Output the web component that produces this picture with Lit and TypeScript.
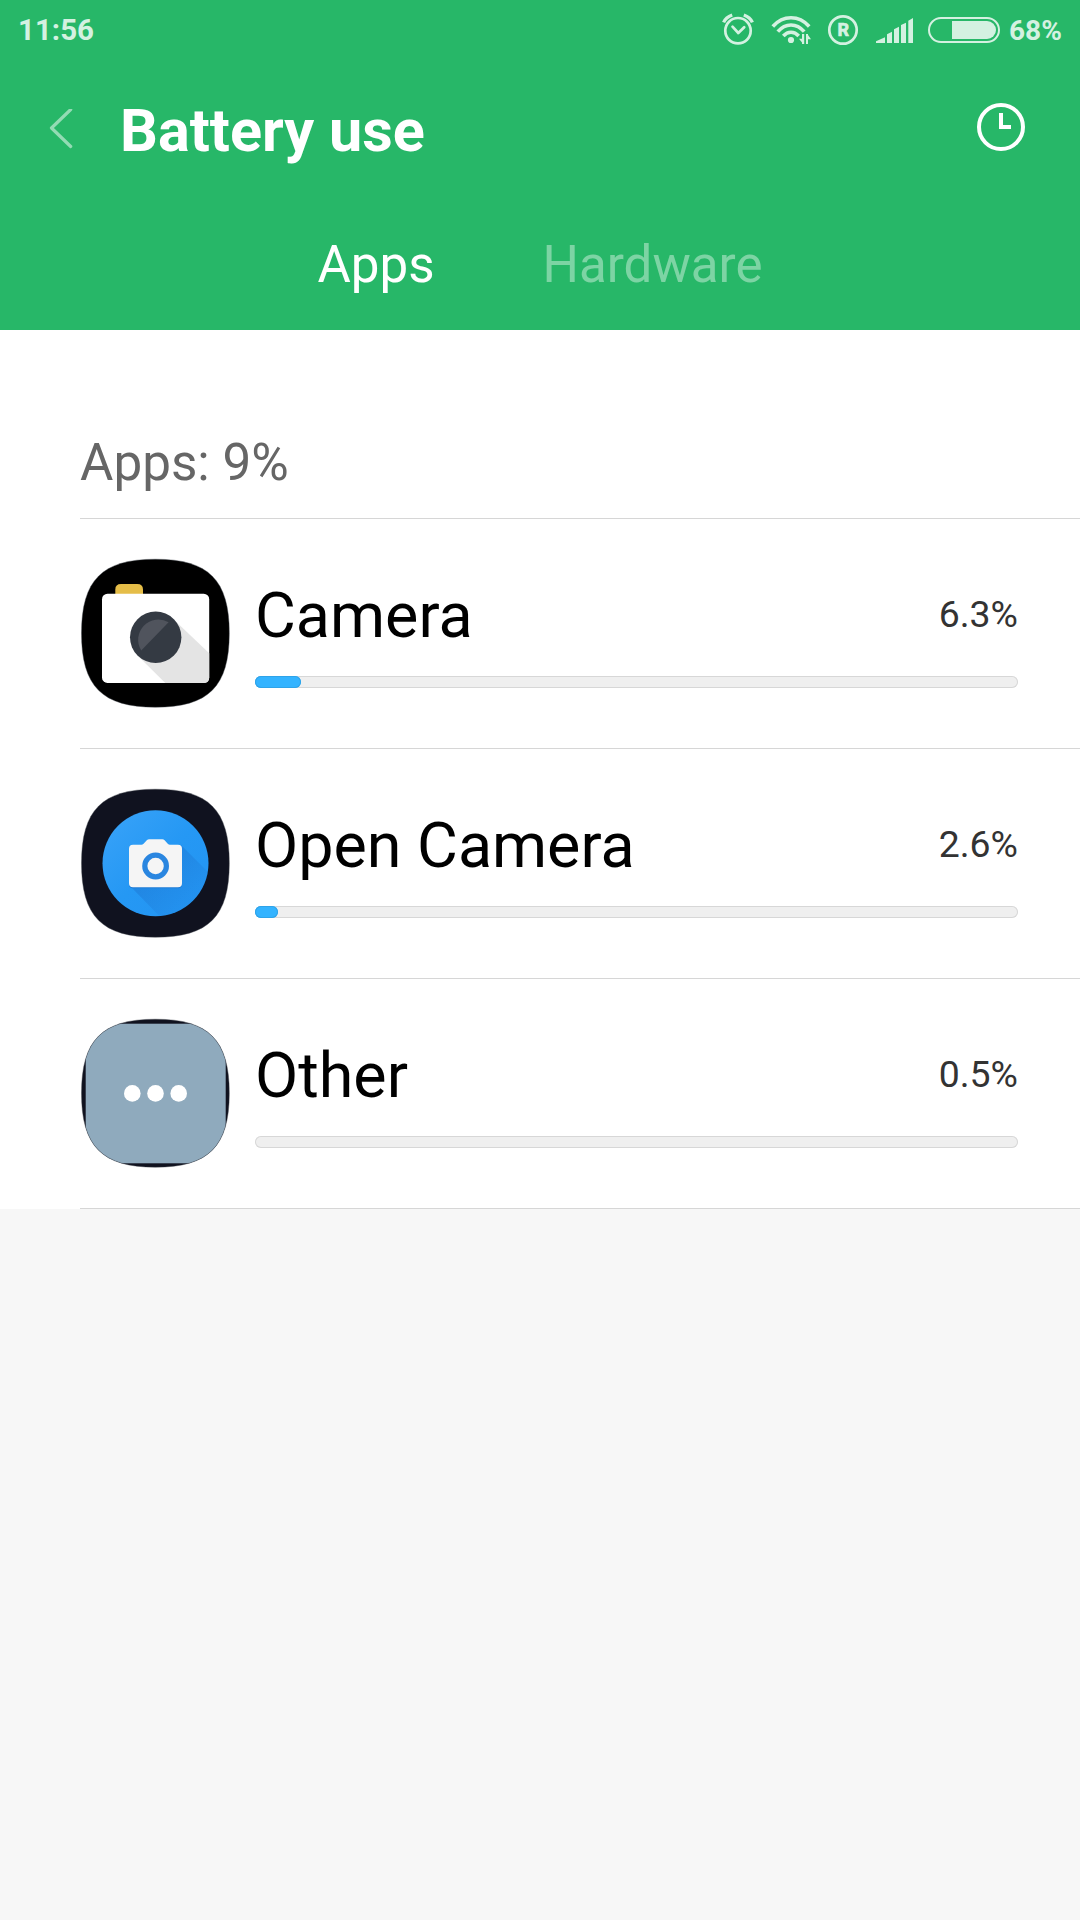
import { LitElement, html, svg, css } from "lit";
import { customElement, property } from "lit/decorators.js";

interface Usage {
  name: string;
  icon: "camera" | "open-camera" | "other";
  value: string;
  share: number;
}

const USAGE: Usage[] = [
  { name: "Camera", icon: "camera", value: "6.3%", share: 6 },
  { name: "Open Camera", icon: "open-camera", value: "2.6%", share: 3 },
  { name: "Other", icon: "other", value: "0.5%", share: 0 },
];

// Rounded launcher-icon mask shared by every app icon.
const SQUIRCLE =
  "M75.4 1.2C128.6 1.2 149.3 21.8 149.3 75.2C149.3 128.5 128.6 149.2 75.4 149.2C22.2 149.2 1.5 128.5 1.5 75.2C1.5 21.8 22.2 1.2 75.4 1.2Z";

@customElement("app-icon")
export class AppIcon extends LitElement {
  @property() kind: Usage["icon"] = "other";

  static styles = css`
    :host {
      display: block;
      width: 150px;
      height: 150px;
    }
    svg {
      display: block;
    }
    .edge {
      fill: none;
      stroke: #3c4048;
      stroke-opacity: 0.4;
      stroke-width: 1;
    }
  `;

  private art() {
    if (this.kind === "camera") {
      return svg`
        <path d=${SQUIRCLE} fill="#000"/>
        <path d="M35.3 38V31.5Q35.3 26 41 26H57.300Q63 26 63 31.500V38Z" fill="#e5bd48"/>
        <rect x="22" y="35.700" width="107.200" height="89.200" rx="5.500" fill="#fff"/>
        <path d="M94 61.700L129.200 95.200V119.400Q129.200 124.900 123.700 124.900H85.300L58 98Z" fill="#e4e4e4"/>
        <circle cx="75.700" cy="79.300" r="25.700" fill="#343a43"/>
        <path d="M88.600 64.200A20.300 20.300 0 0 0 61.200 92.500Z" fill="#50545d"/>`;
    }
    if (this.kind === "open-camera") {
      return svg`
        <defs>
          <linearGradient id="disc" x1="0" y1="0" x2="1" y2="1">
            <stop offset="0" stop-color="#3aa3f8"/>
            <stop offset="0.5" stop-color="#2598f4"/>
            <stop offset="1" stop-color="#2394f2"/>
          </linearGradient>
          <linearGradient id="cast" x1="0" y1="0" x2="1" y2="1">
            <stop offset="0.3" stop-color="#1c6fcb" stop-opacity="0.4"/>
            <stop offset="0.75" stop-color="#1c6fcb" stop-opacity="0"/>
          </linearGradient>
          <clipPath id="clip"><circle cx="75.500" cy="75.200" r="53"/></clipPath>
        </defs>
        <path d=${SQUIRCLE} fill="#10121f"/>
        <circle cx="75.500" cy="75.200" r="53" fill="url(#disc)"/>
        <path d="M101 57L145 101V145H96L50.500 98.500Z" fill="url(#cast)" clip-path="url(#clip)"/>
        <path d="M53 57.700H62.200L68.500 52.300H83L88.700 57.700H98Q102 57.700 102 61.700V96.300Q102 100.300 98 100.300H53Q49 100.300 49 96.300V61.700Q49 57.700 53 57.700Z" fill="#1d7bd6"/>
        <path d="M53 56.700H61.500Q62.500 56.700 63.300 55.900L66.800 52.300Q67.800 51.300 69.200 51.300H82.300Q83.700 51.300 84.600 52.300L88 55.900Q88.800 56.700 89.800 56.700H98Q102 56.700 102 60.700V95.300Q102 99.300 98 99.300H53Q49 99.300 49 95.300V60.700Q49 56.700 53 56.700Z" fill="#f5f5f5"/>
        <circle cx="75.600" cy="78" r="10.800" fill="#f5f5f5" stroke="#2a86e0" stroke-width="5.200"/>`;
    }
    return svg`
      <defs><clipPath id="mask"><path d=${SQUIRCLE}/></clipPath></defs>
      <path d=${SQUIRCLE} fill="#10121f"/>
      <rect x="5.700" y="5.700" width="140" height="139.600" fill="#8faabd" clip-path="url(#mask)"/>
      <circle cx="52.300" cy="75.400" r="8.300" fill="#fff"/>
      <circle cx="75.500" cy="75.400" r="8.300" fill="#fff"/>
      <circle cx="98.700" cy="75.400" r="8.300" fill="#fff"/>`;
  }

  render() {
    return html`<svg width="150" height="150" viewBox="0 0 150 150">${this.art()}<path class="edge" d=${SQUIRCLE}/></svg>`;
  }
}

@customElement("status-bar")
export class StatusBar extends LitElement {
  static styles = css`
    :host {
      display: flex;
      align-items: center;
      height: 60px;
      box-sizing: border-box;
      padding: 0 18px 0 18px;
      color: #d4f1e1;
      font-weight: 700;
    }
    svg {
      display: block;
      flex: none;
    }
    .time {
      flex: 1;
      font-size: 29.500px;
      line-height: 60px;
    }
    .level {
      width: 53px;
      font-size: 28px;
      line-height: 61px;
      white-space: nowrap;
    }
    .letter {
      font: 700 18px Roboto, sans-serif;
      stroke: currentColor;
      stroke-width: 0.7;
    }
  `;

  render() {
    return html`
      <span class="time">11:56</span>
      <svg width="289" height="60" viewBox="720 0 289 60" fill="none" stroke="currentColor">
        <circle cx="738" cy="30.700" r="12.700" stroke-width="2.700"/>
        <path d="M732.500 26.700L738.300 33L744.200 27.200" stroke-width="2.700" stroke-linecap="round" stroke-linejoin="round"/>
        <path d="M723.600 22.300Q725.800 17.300 732.200 15M752.400 22.300Q750.200 17.300 743.800 15" stroke-width="3.300"/>
        <g stroke-width="3.600">
          <path d="M772.800 26.500Q780.500 17.800 791 17.800T809.200 26.500"/>
          <path d="M777.800 31.700Q783.500 25 791 25T804.200 31.700"/>
          <path d="M783.300 36Q786.700 32.300 791 32.300T798.700 36"/>
        </g>
        <g fill="currentColor" stroke="none">
          <circle cx="791" cy="40" r="3.100"/>
          <path d="M802 34H804.200V44H802V42.500L799 38.700H802ZM806 34H808V35L811 39.300H808V44H806Z"/>
          <path d="M876 43V41.300L885 37.300V43ZM887 43V34.300L892 31.700V43ZM894 43V29.300L899 26.700V43ZM901 43V25L906 22.700V43ZM908.300 43V20.700L913 18V43Z"/>
          <path d="M952 21H987A9 9 0 0 1 987 39H952Z"/>
          <text class="letter" x="837.400" y="36">R</text>
        </g>
        <circle cx="843" cy="30" r="13.700" stroke-width="2.700"/>
        <rect x="929" y="18" width="70" height="24" rx="12" stroke-width="2"/>
      </svg>
      <span class="level">68%</span>
    `;
  }
}

@customElement("app-root")
export class AppRoot extends LitElement {
  static styles = css`
    :host {
      display: flex;
      flex-direction: column;
      width: 1080px;
      height: 1920px;
      background: #f7f7f7;
      font-family: Roboto, sans-serif;
      overflow: hidden;
    }
    header {
      height: 330px;
      background: #27b768;
      color: #fff;
    }
    svg {
      display: block;
      flex: none;
    }
    .title-bar {
      display: flex;
      align-items: center;
      box-sizing: border-box;
      height: 139px;
      padding: 2px 53px 0 48px;
    }
    h1 {
      flex: 1;
      margin: 0 0 0 46px;
      font-size: 59.400px;
      line-height: 80px;
      font-weight: 700;
    }
    .tabs {
      display: flex;
      justify-content: center;
      gap: 108px;
      font-size: 51.100px;
      line-height: 131px;
    }
    .tab {
      color: #7dd4a4;
    }
    .tab.active {
      color: #fff;
    }
    main {
      padding-left: 80px;
      background: #fff;
    }
    h2 {
      margin: 0;
      padding-top: 78px;
      border-bottom: 1px solid #d6d6d6;
      color: #666;
      font-size: 51.200px;
      line-height: 110px;
      font-weight: 400;
    }
    .row {
      display: flex;
      gap: 25px;
      box-sizing: border-box;
      height: 230px;
      padding: 39px 62px 0 0;
      border-bottom: 1px solid #d6d6d6;
    }
    .body {
      flex: 1;
      padding-top: 18px;
    }
    .labels {
      display: flex;
      justify-content: space-between;
      line-height: 79px;
    }
    .name {
      color: #000;
      font-size: 62.800px;
    }
    .value {
      color: #333;
      font-size: 37.400px;
      line-height: 76px;
    }
    .track {
      box-sizing: border-box;
      height: 12px;
      margin-top: 21px;
      border-radius: 6px;
      background: #efefef;
      box-shadow: inset 0 0 0 1px #d7d7d7;
    }
    .fill {
      height: 12px;
      border-radius: 6px;
      background: #33b3ff;
      box-shadow: inset 0 0 0 1px #2fa3e8;
    }
  `;

  render() {
    return html`
      <header>
        <status-bar></status-bar>
        <div class="title-bar">
          <svg width="26" height="44" viewBox="48 109 26 44" fill="none" stroke="#fff" stroke-opacity="0.5" stroke-width="3.200" stroke-linecap="round" stroke-linejoin="round">
            <path d="M70.700 109.500L51.500 128L70.700 146.500"/>
          </svg>
          <h1>Battery use</h1>
          <svg width="52" height="58" viewBox="975 102 52 58" fill="none" stroke="#fff" stroke-width="4">
            <circle cx="1001" cy="127" r="22"/>
            <path d="M1001 113V127H1011"/>
          </svg>
        </div>
        <nav class="tabs">
          <span class="tab active">Apps</span>
          <span class="tab">Hardware</span>
        </nav>
      </header>
      <main>
        <h2>Apps: 9%</h2>
        ${USAGE.map(
          (item) => html`
            <div class="row">
              <app-icon .kind=${item.icon}></app-icon>
              <div class="body">
                <div class="labels">
                  <span class="name">${item.name}</span>
                  <span class="value">${item.value}</span>
                </div>
                <div class="track">
                  ${item.share > 0
                    ? html`<div class="fill" style="width: ${item.share}%"></div>`
                    : null}
                </div>
              </div>
            </div>
          `
        )}
      </main>
    `;
  }
}
